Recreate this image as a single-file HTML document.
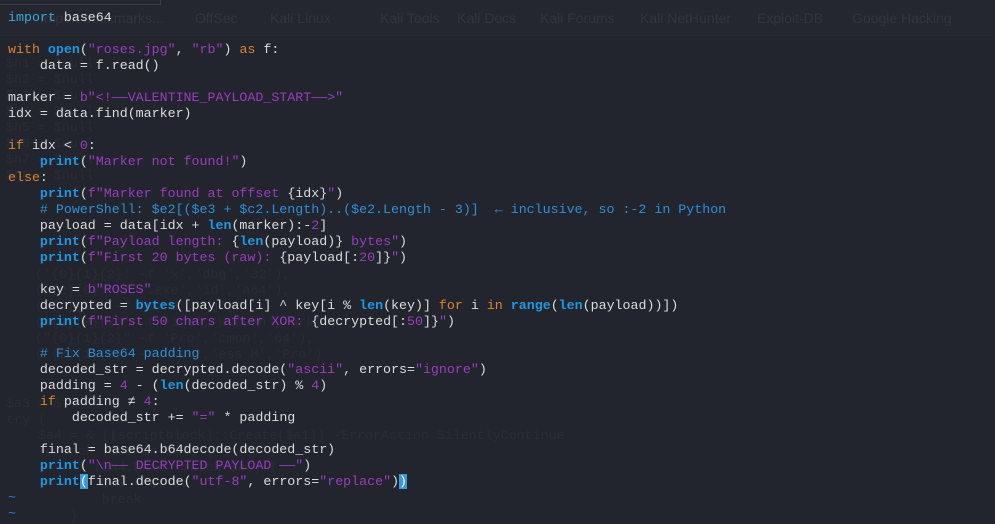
<!DOCTYPE html><html><head><meta charset="utf-8"><style>
body{margin:0;width:995px;height:514px;overflow:hidden;background:#22252e;position:relative;font-family:"Liberation Mono","DejaVu Sans Mono",monospace}
.top{position:absolute;left:0;top:0;width:995px;height:35px;background:#24272f;border-bottom:1px solid #282b33}
.tab{position:absolute;top:0;left:0;width:160px;height:4px;border-bottom:1px solid #3a3d45;border-right:1px solid #3a3d45}
.bm{position:absolute;top:10px;font-family:"Liberation Sans",sans-serif;font-size:14px;color:#32353d;white-space:pre}
.ghost{position:absolute;color:#2a2d35;font-size:13.3px;white-space:pre}
pre{position:absolute;left:8px;top:10px;margin:0;font-size:13.3px;line-height:16px;color:#dcdcdc;font-family:inherit}
.k{color:#db8430}.b{color:#2197e3;font-weight:bold}.s{color:#9a3cc0}.n{color:#9a3cc0}.c{color:#2e8fd6}.t{color:#2e7ad6}
.hl{background:#3a9ad9;color:#fff}
</style></head><body>
<div class="top"><div class="tab"></div></div>
<div class="bm" style="left:40px">Import bookmarks...</div>
<div class="bm" style="left:195px">OffSec</div>
<div class="bm" style="left:270px">Kali Linux</div>
<div class="bm" style="left:380px">Kali Tools</div>
<div class="bm" style="left:457px">Kali Docs</div>
<div class="bm" style="left:540px">Kali Forums</div>
<div class="bm" style="left:640px">Kali NetHunter</div>
<div class="bm" style="left:757px">Exploit-DB</div>
<div class="bm" style="left:852px">Google Hacking</div>
<div class="ghost" style="left:6px;top:56px;line-height:16px">$h1 = $null
$h2 = $null
$h3 = $null
$h4 = $null
$h5 = $null
$h6 = $null
$h7 = $null
$h8 = $null</div>
<div class="ghost" style="left:35px;top:267px;line-height:16px">('{0}{1}{2}' -f 'x','dbg','32'),
('{2}{0}' -f '.exe','id','a64'),
('{0}{1}' -f 'Wind','bg'),
('{1}{0}{2}' -f 'ire','Wiresh','ark'),
("{0}{1}{2}" -f 'Pro','cmon','64'),
('{2}{1}{0}' -f 'han','ess M','Pro')</div>
<div class="ghost" style="left:6px;top:396px;line-height:16px">$a3 = $false
try {
    $a4 = &amp; ([scriptblock]::Create($a1)) -ErrorAction SilentlyContinue
    foreach ($a5 in $a4) {
        if ($a4.Name -match $a5) {
            $a3 = $true
            break
        }</div>
<pre><span style="color:#3aa8d8">import</span> base64

<span class="k">with</span> <span class="b">open</span>(<span class="s">"roses.jpg"</span>, <span class="s">"rb"</span>) <span class="k">as</span> f:
    data = f.read()

marker = <span class="s">b"&lt;!——VALENTINE_PAYLOAD_START——&gt;"</span>
idx = data.find(marker)

<span class="k">if</span> idx &lt; <span class="n">0</span>:
    <span class="b">print</span>(<span class="s">"Marker not found!"</span>)
<span class="k">else</span>:
    <span class="b">print</span>(<span class="s">f"Marker found at offset </span>{idx}<span class="s">"</span>)
    <span class="c"># PowerShell: $e2[($e3 + $c2.Length)..($e2.Length - 3)]  ← inclusive, so :-2 in Python</span>
    payload = data[idx + <span class="b">len</span>(marker):-<span class="n">2</span>]
    <span class="b">print</span>(<span class="s">f"Payload length: </span>{<span class="b">len</span>(payload)}<span class="s"> bytes"</span>)
    <span class="b">print</span>(<span class="s">f"First 20 bytes (raw): </span>{payload[:<span class="n">20</span>]}<span class="s">"</span>)

    key = <span class="s">b"ROSES"</span>
    decrypted = <span class="b">bytes</span>([payload[i] ^ key[i % <span class="b">len</span>(key)] <span class="k">for</span> i <span class="k">in</span> <span class="b">range</span>(<span class="b">len</span>(payload))])
    <span class="b">print</span>(<span class="s">f"First 50 chars after XOR: </span>{decrypted[:<span class="n">50</span>]}<span class="s">"</span>)

    <span class="c"># Fix Base64 padding</span>
    decoded_str = decrypted.decode(<span class="s">"ascii"</span>, errors=<span class="s">"ignore"</span>)
    padding = <span class="n">4</span> - (<span class="b">len</span>(decoded_str) % <span class="n">4</span>)
    <span class="k">if</span> padding ≠ <span class="n">4</span>:
        decoded_str += <span class="s">"="</span> * padding

    final = base64.b64decode(decoded_str)
    <span class="b">print</span>(<span class="s">"\n—— DECRYPTED PAYLOAD ——"</span>)
    <span class="b">print</span><span class="hl">(</span>final.decode(<span class="s">"utf-8"</span>, errors=<span class="s">"replace"</span>)<span class="hl">)</span>
<span class="t">~</span>
<span class="t">~</span></pre>
</body></html>
